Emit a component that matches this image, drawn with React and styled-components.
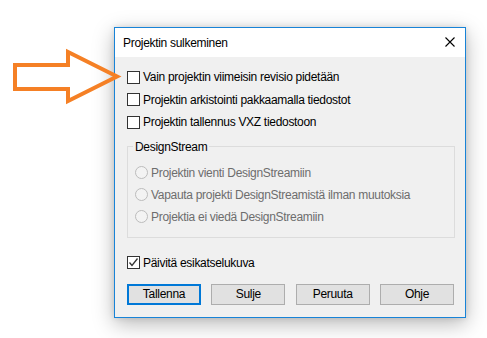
import React from "react";
import styled, { createGlobalStyle } from "styled-components";

const GlobalStyle = createGlobalStyle`
  html, body { margin: 0; padding: 0; background: #ffffff; }
  body { font-family: "Liberation Sans", Arial, sans-serif; font-size: 12px; color: #000; letter-spacing: -0.3px; }
`;

const Page = styled.div`
  position: relative;
  width: 487px;
  height: 338px;
  box-sizing: border-box;
  padding: 27px 0 0 114px;
  overflow: hidden;
`;

const Dialog = styled.div`
  width: 352px;
  box-sizing: border-box;
  border: 1px solid #1883d7;
  background: #f0f0f0;
  box-shadow: 0 6px 20px rgba(0, 0, 0, 0.28), 0 0 6px rgba(0, 0, 0, 0.12);
  display: flex;
  flex-direction: column;
`;

const TitleBar = styled.div`
  height: 29px;
  background: #ffffff;
  display: flex;
  align-items: center;
  justify-content: space-between;
  padding: 0 10px 0 8px;
`;

const Title = styled.span`
  font-size: 12px;
  color: #000;
`;

const CloseButton = styled.div`
  width: 10px;
  height: 10px;
  display: flex;
  margin-top: -1px;
`;

const Body = styled.div`
  display: flex;
  flex-direction: column;
  padding: 9px 10px 12px 12px;
`;

const Row = styled.label`
  height: ${(p) => p.$h || 22.5}px;
  display: flex;
  align-items: center;
  gap: 3px;
  margin-top: ${(p) => p.$mt || 0}px;
  color: ${(p) => (p.$disabled ? "#6d6d6d" : "#000")};
  font-size: 12px;
  white-space: nowrap;
`;

const Box = styled.span`
  width: 13px;
  height: 13px;
  box-sizing: border-box;
  border: 1px solid #333333;
  background: #ffffff;
  display: flex;
  align-items: center;
  justify-content: center;
  flex: none;
`;

const Radio = styled.span`
  width: 13px;
  height: 13px;
  box-sizing: border-box;
  border: 1px solid #bcbcbc;
  border-radius: 50%;
  background: #f3f3f3;
  flex: none;
`;

const Group = styled.fieldset`
  margin: 5px 0 0 0;
  padding: 7px 7px 9px 7px;
  border: 1px solid #dcdcdc;
  min-inline-size: 0;
  display: flex;
  flex-direction: column;
`;

const Legend = styled.legend`
  padding: 0 2px;
  margin-left: -2px;
  font-size: 12px;
  line-height: 16px;
  color: #000;
`;

const ButtonRow = styled.div`
  display: flex;
  justify-content: space-between;
  margin-top: 10px;
  padding-right: 1px;
`;

const Button = styled.button`
  width: 74px;
  height: 21px;
  box-sizing: border-box;
  background: #e1e1e1;
  border: ${(p) => (p.$default ? "2px solid #0078d7" : "1px solid #adadad")};
  font-family: inherit;
  letter-spacing: inherit;
  font-size: 12px;
  color: #000;
  padding: 0;
  display: flex;
  align-items: center;
  justify-content: center;
`;

const Callout = styled.svg`
  position: absolute;
  left: 0;
  top: 0;
`;

const Check = () => (
  <svg width="11" height="11" viewBox="0 0 11 11">
    <path d="M1.5 5.5 L4 8.5 L9.5 1.5" fill="none" stroke="#333" strokeWidth="1.3" />
  </svg>
);

export default function App() {
  return (
    <>
      <GlobalStyle />
      <Page>
        <Dialog>
          <TitleBar>
            <Title>Projektin sulkeminen</Title>
            <CloseButton>
              <svg width="10" height="10" viewBox="0 0 10 10">
                <path d="M0.5 0.5 L9.5 9.5 M9.5 0.5 L0.5 9.5" stroke="#000" strokeWidth="1.1" />
              </svg>
            </CloseButton>
          </TitleBar>
          <Body>
            <Row>
              <Box />
              Vain projektin viimeisin revisio pidetään
            </Row>
            <Row>
              <Box />
              Projektin arkistointi pakkaamalla tiedostot
            </Row>
            <Row>
              <Box />
              Projektin tallennus VXZ tiedostoon
            </Row>
            <Group>
              <Legend>DesignStream</Legend>
              <Row $h={22} $disabled>
                <Radio />
                Projektin vienti DesignStreamiin
              </Row>
              <Row $h={22} $disabled>
                <Radio />
                Vapauta projekti DesignStreamistä ilman muutoksia
              </Row>
              <Row $h={22} $disabled>
                <Radio />
                Projektia ei viedä DesignStreamiin
              </Row>
            </Group>
            <Row $h={22} $mt={14}>
              <Box>
                <Check />
              </Box>
              Päivitä esikatselukuva
            </Row>
            <ButtonRow>
              <Button $default>Tallenna</Button>
              <Button>Sulje</Button>
              <Button>Peruuta</Button>
              <Button>Ohje</Button>
            </ButtonRow>
          </Body>
        </Dialog>
        <Callout width="130" height="120" viewBox="0 0 130 120">
          <polygon
            points="15,65 68,65 68,52 117,76.5 68,101 68,89 15,89"
            fill="none"
            stroke="#f58025"
            strokeWidth="4"
            strokeLinejoin="miter"
          />
        </Callout>
      </Page>
    </>
  );
}
